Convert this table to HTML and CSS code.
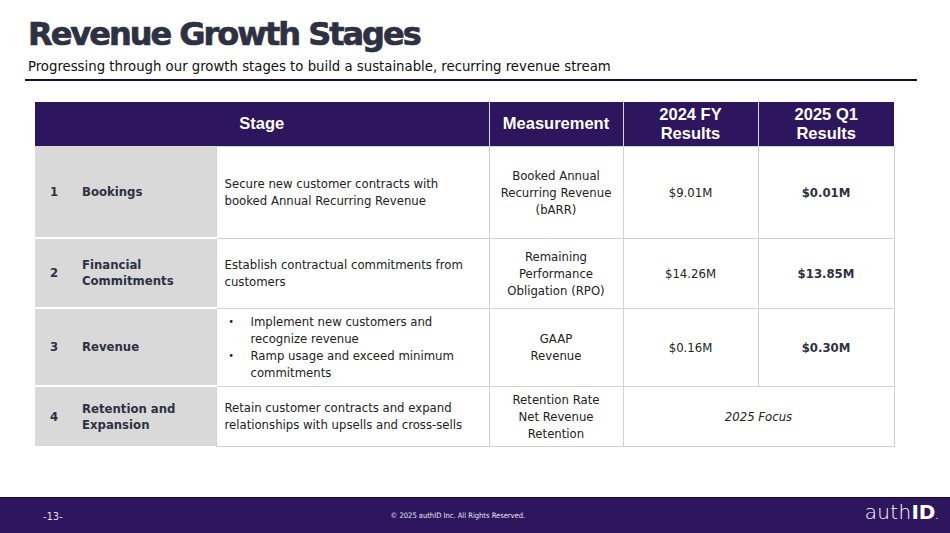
FILE: index.html
```html
<!DOCTYPE html>
<html>
<head>
<meta charset="utf-8">
<link rel="stylesheet" href="styles.css">
</head>
<body>
<div class="slide">
  <header class="head">
    <h1 class="title">Revenue Growth Stages</h1>
    <p class="subtitle">Progressing through our growth stages to build a sustainable, recurring revenue stream</p>
    <div class="rule"></div>
  </header>
  <main class="content">
    <table class="stages">
      <colgroup>
        <col class="c-stage"><col class="c-desc"><col class="c-meas"><col class="c-fy"><col class="c-q1">
      </colgroup>
      <thead>
        <tr class="r-head">
          <th colspan="2">Stage</th>
          <th>Measurement</th>
          <th>2024 FY<br>Results</th>
          <th>2025 Q1<br>Results</th>
        </tr>
      </thead>
      <tbody>
        <tr class="r1">
          <td class="stage"><div class="stage-in"><span class="num">1</span><span class="name">Bookings</span></div></td>
          <td class="desc">Secure new customer contracts with<br>booked Annual Recurring Revenue</td>
          <td class="meas">Booked Annual<br>Recurring Revenue<br>(bARR)</td>
          <td class="val">$9.01M</td>
          <td class="val bold">$0.01M</td>
        </tr>
        <tr class="r2">
          <td class="stage"><div class="stage-in"><span class="num">2</span><span class="name">Financial<br>Commitments</span></div></td>
          <td class="desc">Establish contractual commitments from<br>customers</td>
          <td class="meas">Remaining<br>Performance<br>Obligation (RPO)</td>
          <td class="val">$14.26M</td>
          <td class="val bold">$13.85M</td>
        </tr>
        <tr class="r3">
          <td class="stage"><div class="stage-in"><span class="num">3</span><span class="name">Revenue</span></div></td>
          <td class="desc">
            <ul class="bullets">
              <li>Implement new customers and<br>recognize revenue</li>
              <li>Ramp usage and exceed minimum<br>commitments</li>
            </ul>
          </td>
          <td class="meas">GAAP<br>Revenue</td>
          <td class="val">$0.16M</td>
          <td class="val bold">$0.30M</td>
        </tr>
        <tr class="r4">
          <td class="stage"><div class="stage-in"><span class="num">4</span><span class="name">Retention and<br>Expansion</span></div></td>
          <td class="desc">Retain customer contracts and expand<br>relationships with upsells and cross-sells</td>
          <td class="meas">Retention Rate<br>Net Revenue<br>Retention</td>
          <td class="val focus" colspan="2">2025 Focus</td>
        </tr>
      </tbody>
    </table>
  </main>
  <footer class="foot">
    <span class="page">-13-</span>
    <span class="copy">© 2025 authID Inc. All Rights Reserved.</span>
    <span class="logo"><span class="auth">auth</span><span class="id">ID</span><span class="dot">.</span></span>
  </footer>
</div>
</body>
</html>
```

FILE: styles.css
```css
* { box-sizing: border-box; }
html, body { margin: 0; padding: 0; background: #ffffff; }
.slide {
  width: 950px;
  height: 533px;
  display: flex;
  flex-direction: column;
  font-family: "DejaVu Sans Condensed", "DejaVu Sans", sans-serif;
  color: #222222;
  overflow: hidden;
}
.head { padding: 14px 33px 0 25px; }
.title {
  margin: 0 0 0 3px;
  font-family: "DejaVu Sans", sans-serif;
  font-weight: 700;
  font-size: 32px;
  line-height: 40px;
  letter-spacing: -2px;
  color: #2e3142;
  -webkit-text-stroke: 0.7px #2e3142;
}
.subtitle {
  margin: 2px 0 0 3px;
  font-size: 14.75px;
  line-height: 19px;
  color: #111111;
}
.rule {
  margin-top: 4px;
  height: 2px;
  background: #1e0b3d;
}
.content { padding: 21px 0 0 35px; }
.stages {
  border-collapse: collapse;
  table-layout: fixed;
  width: 859px;
}
.c-stage { width: 181px; }
.c-desc { width: 273px; }
.c-meas { width: 134px; }
.c-fy { width: 135px; }
.c-q1 { width: 136px; }
.r-head { height: 44px; }
.r-head th {
  background: #2d165e;
  color: #ffffff;
  font-family: "Liberation Sans", Arial, sans-serif;
  font-weight: 700;
  font-size: 16.5px;
  line-height: 19px;
  text-align: center;
  padding: 0;
  border-left: 1px solid #d8d8d8;
}
.r-head th:first-child { border-left: none; }
.r1 { height: 92px; }
.r2 { height: 70px; }
.r3 { height: 78px; }
.r4 { height: 60px; }
td {
  padding: 0;
  border: 1px solid #d3d3d3;
  font-size: 13px;
  line-height: 17px;
  vertical-align: middle;
  color: #222222;
}
td.stage {
  background: #d9d9d9;
  border-left: none;
  border-top: 2px solid #ffffff;
  border-bottom: 2px solid #ffffff;
}
tbody tr:first-child td.stage { border-top: none; }
tbody tr:last-child td.stage { border-bottom: none; }
.stage-in {
  display: flex;
  align-items: center;
  padding-left: 15px;
  font-weight: 700;
  color: #2e3142;
  line-height: 16px;
}
.num { width: 32px; }
.desc { padding-left: 8px; }
.meas { text-align: center; }
.val { text-align: center; }
.bold { font-weight: 700; color: #2e3142; }
.focus { font-style: italic; }
.bullets {
  margin: 0;
  padding: 0 0 0 4px;
  list-style: none;
}
.bullets li {
  position: relative;
  padding-left: 22px;
}
.bullets li::before {
  content: "•";
  position: absolute;
  left: 0;
  top: 0;
  font-size: 10px;
}
.foot {
  margin-top: auto;
  height: 36px;
  background: #2d165e;
  border-top: 1px solid #17093a;
  display: flex;
  align-items: center;
  position: relative;
  padding: 0 12px 0 43px;
  color: #e8e6f0;
}
.page {
  font-family: "DejaVu Sans Condensed", sans-serif;
  font-size: 10.5px;
  letter-spacing: 0.3px;
}
.copy {
  flex: 1;
  text-align: center;
  font-size: 7.5px;
  padding-right: 12px;
}
.logo {
  font-family: "DejaVu Sans", sans-serif;
  color: #ffffff;
  font-size: 20px;
  line-height: 20px;
  margin-bottom: 2px;
}
.auth { font-weight: 300; font-family: "DejaVu Sans ExtraLight", "DejaVu Sans", sans-serif; letter-spacing: 0.3px; }
.id { font-weight: 700; }
.dot { font-size: 8px; }
```
